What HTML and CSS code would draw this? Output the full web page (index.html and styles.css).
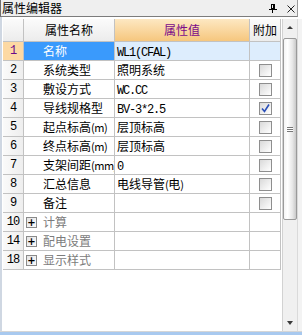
FILE: index.html
```
<!DOCTYPE html>
<html>
<head>
<meta charset="utf-8">
<link rel="stylesheet" href="styles.css">
</head>
<body>
<div class="panel">
  <div class="title">
    <span class="title-text">属性编辑器</span>
    <div class="tools">
      <svg class="pin" width="8" height="9" viewBox="0 0 8 9"><rect x="2.5" y="0.5" width="3" height="4" fill="none" stroke="#000"/><rect x="4" y="1" width="1" height="4" fill="#000"/><line x1="0" y1="5.5" x2="8" y2="5.5" stroke="#000"/><line x1="3.5" y1="6" x2="3.5" y2="9" stroke="#000"/></svg>
      <svg class="close" width="8" height="8" viewBox="0 0 8 8"><path d="M0.5 0.5 L7.5 7.5 M7.5 0.5 L0.5 7.5" stroke="#222" stroke-width="1" fill="none"/></svg>
    </div>
  </div>
  <div class="main">
    <div class="gridwrap">
      <div class="grid">
        <div class="c hn"></div>
        <div class="c hd">属性名称</div>
        <div class="c hd hv">属性值</div>
        <div class="c hd">附加</div>

        <div class="c n sel">1</div>
        <div class="c nm selname">名称</div>
        <div class="c v selv"><span class="a">WL1(CFAL)</span></div>
        <div class="c ck selv"></div>

        <div class="c n">2</div>
        <div class="c nm">系统类型</div>
        <div class="c v">照明系统</div>
        <div class="c ck"><span class="cb"></span></div>

        <div class="c n">3</div>
        <div class="c nm">敷设方式</div>
        <div class="c v"><span class="a">WC.CC</span></div>
        <div class="c ck"><span class="cb"></span></div>

        <div class="c n">4</div>
        <div class="c nm">导线规格型</div>
        <div class="c v"><span class="a">BV-3*2.5</span></div>
        <div class="c ck"><span class="cb"><svg width="11" height="11" viewBox="0 0 11 11"><path d="M2 5.5 L4.5 8.5 L9 1.5" stroke="#2a4fb8" stroke-width="1.6" fill="none"/></svg></span></div>

        <div class="c n">5</div>
        <div class="c nm">起点标高<span class="s">(m)</span></div>
        <div class="c v">层顶标高</div>
        <div class="c ck"><span class="cb"></span></div>

        <div class="c n">6</div>
        <div class="c nm">终点标高<span class="s">(m)</span></div>
        <div class="c v">层顶标高</div>
        <div class="c ck"><span class="cb"></span></div>

        <div class="c n">7</div>
        <div class="c nm">支架间距<span class="s">(mm)</span></div>
        <div class="c v"><span class="a">0</span></div>
        <div class="c ck"><span class="cb"></span></div>

        <div class="c n">8</div>
        <div class="c nm">汇总信息</div>
        <div class="c v">电线导管<span class="s">(</span>电<span class="s">)</span></div>
        <div class="c ck"><span class="cb"></span></div>

        <div class="c n">9</div>
        <div class="c nm">备注</div>
        <div class="c v"></div>
        <div class="c ck"><span class="cb"></span></div>

        <div class="c n">10</div>
        <div class="c nm grp"><span class="plus">+</span>计算</div>
        <div class="c v"></div>
        <div class="c ck"></div>

        <div class="c n">14</div>
        <div class="c nm grp"><span class="plus">+</span>配电设置</div>
        <div class="c v"></div>
        <div class="c ck"></div>

        <div class="c n">18</div>
        <div class="c nm grp"><span class="plus">+</span>显示样式</div>
        <div class="c v"></div>
        <div class="c ck"></div>
      </div>
    </div>
    <div class="sb">
      <div class="sb-btn"><span class="up"></span></div>
      <div class="sb-track"><div class="thumb"><span class="grip"></span></div></div>
      <div class="sb-btn down-btn"><span class="down"></span></div>
    </div>
    <div class="rside"></div>
  </div>
  <div class="foot"></div>
</div>
</body>
</html>
```
FILE: styles.css
```
* { box-sizing: border-box; }
html, body { margin: 0; padding: 0; }
body {
  width: 302px;
  height: 335px;
  overflow: hidden;
  background: #ffffff;
  font-family: "Noto Sans CJK SC", "Liberation Sans", sans-serif;
  font-size: 12px;
  color: #000;
}
.panel {
  width: 302px;
  height: 335px;
  display: flex;
  flex-direction: column;
}
.title {
  height: 17px;
  width: 298px;
  flex: none;
  display: flex;
  align-items: center;
  justify-content: space-between;
  background: #efefef;
  border-left: 1px solid #6e6e6e;
  border-right: 1px solid #9a9a9a;
  border-bottom: 1px solid #7c7c7c;
  padding-left: 1px;
  padding-right: 2px;
}
.title-text {
  line-height: 16px;
  font-size: 12px;
}
.tools {
  display: flex;
  align-items: center;
  gap: 10px;
  padding-top: 1px;
}
.pin { display: block; }
.close { display: block; }
.main {
  flex: 1;
  display: flex;
  padding-top: 2px;
  border-left: 2px solid #cfd7e2;
  background: #ffffff;
}
.gridwrap {
  width: 280px;
  padding-left: 1px;
  background: #fff;
}
.grid {
  display: grid;
  grid-template-columns: 21px 91px 135px 31px;
  grid-template-rows: 23px;
  grid-auto-rows: 19px;
}
.c {
  border-right: 1px solid #c2c2c2;
  border-bottom: 1px solid #c2c2c2;
  white-space: nowrap;
  overflow: hidden;
  line-height: 18px;
}
.hn, .hd {
  background: linear-gradient(#fbfbfb, #ececec);
}
.hd {
  text-align: center;
  line-height: 22px;
}
.hv {
  background: linear-gradient(#fde8c2, #f6c77e);
  color: #7a0a8a;
}
.n {
  text-align: center;
  background: linear-gradient(90deg, #fafafa, #eeeeee);
  font-size: 12px;
  font-family: "Liberation Mono", monospace;
  letter-spacing: -1px;
}
.sel {
  background: #fdd9a3;
  color: #6a0a8a;
}
.nm {
  padding-left: 19px;
}
.selname {
  background: #3a9afc;
  color: #fff;
}
.selv {
  background: #ddedfd;
}
.v {
  padding-left: 2px;
}
.a {
  font-family: "Liberation Mono", monospace;
  font-size: 12px;
  letter-spacing: -1.2px;
}
.s {
  font-size: 11px;
  letter-spacing: -0.5px;
}
.ck {
  display: flex;
  align-items: center;
  justify-content: center;
}
.cb {
  width: 13px;
  height: 13px;
  border: 1px solid #8e8e8e;
  background: linear-gradient(135deg, #d9d9d9, #f4f4f4 70%, #ffffff);
  display: flex;
  align-items: center;
  justify-content: center;
}
.cb svg { display: block; }
.grp {
  padding-left: 2px;
  color: #7c7c7c;
  display: flex;
  align-items: center;
  gap: 6px;
}
.plus {
  width: 11px;
  height: 11px;
  border: 1px solid #8a8a8a;
  background: linear-gradient(135deg, #e4e4e4, #fbfbfb);
  color: #000;
  font-family: "DejaVu Sans", sans-serif;
  font-size: 10px;
  line-height: 9px;
  text-align: center;
  font-weight: bold;
}
.sb {
  width: 16px;
  margin-left: 1px;
  display: flex;
  flex-direction: column;
  background: #f0f0f0;
  border-left: 1px solid #d2d2d2;
  border-right: 1px solid #dadada;
}
.sb-btn {
  height: 17px;
  flex: none;
  display: flex;
  align-items: center;
  justify-content: center;
}
.up {
  width: 0;
  height: 0;
  border-left: 3px solid transparent;
  border-right: 3px solid transparent;
  border-bottom: 3px solid #3a3a3a;
}
.down {
  width: 0;
  height: 0;
  border-left: 3px solid transparent;
  border-right: 3px solid transparent;
  border-top: 4px solid #3a3a3a;
}
.down-btn { margin-top: auto; }
.sb-track {
  flex: 1;
  padding-top: 2px;
}
.thumb {
  height: 182px;
  border: 1px solid #9a9a9a;
  border-radius: 2px;
  background: linear-gradient(90deg, #f4f4f4, #ffffff 30%, #e8e8e8 70%, #c9c9c9);
  display: flex;
  align-items: center;
  justify-content: center;
}
.grip {
  width: 6px;
  height: 5px;
  border-top: 1px solid #777;
  border-bottom: 1px solid #777;
  background: linear-gradient(#fff 0, #fff 1px, #777 1px, #777 2px, #fff 2px);
}
.rside {
  width: 4px;
  background: #f3f3f3;
}
.foot {
  height: 4px;
  flex: none;
  border-top: 1px solid #d6d6d6;
  background: #a8c9ef;
}
```
